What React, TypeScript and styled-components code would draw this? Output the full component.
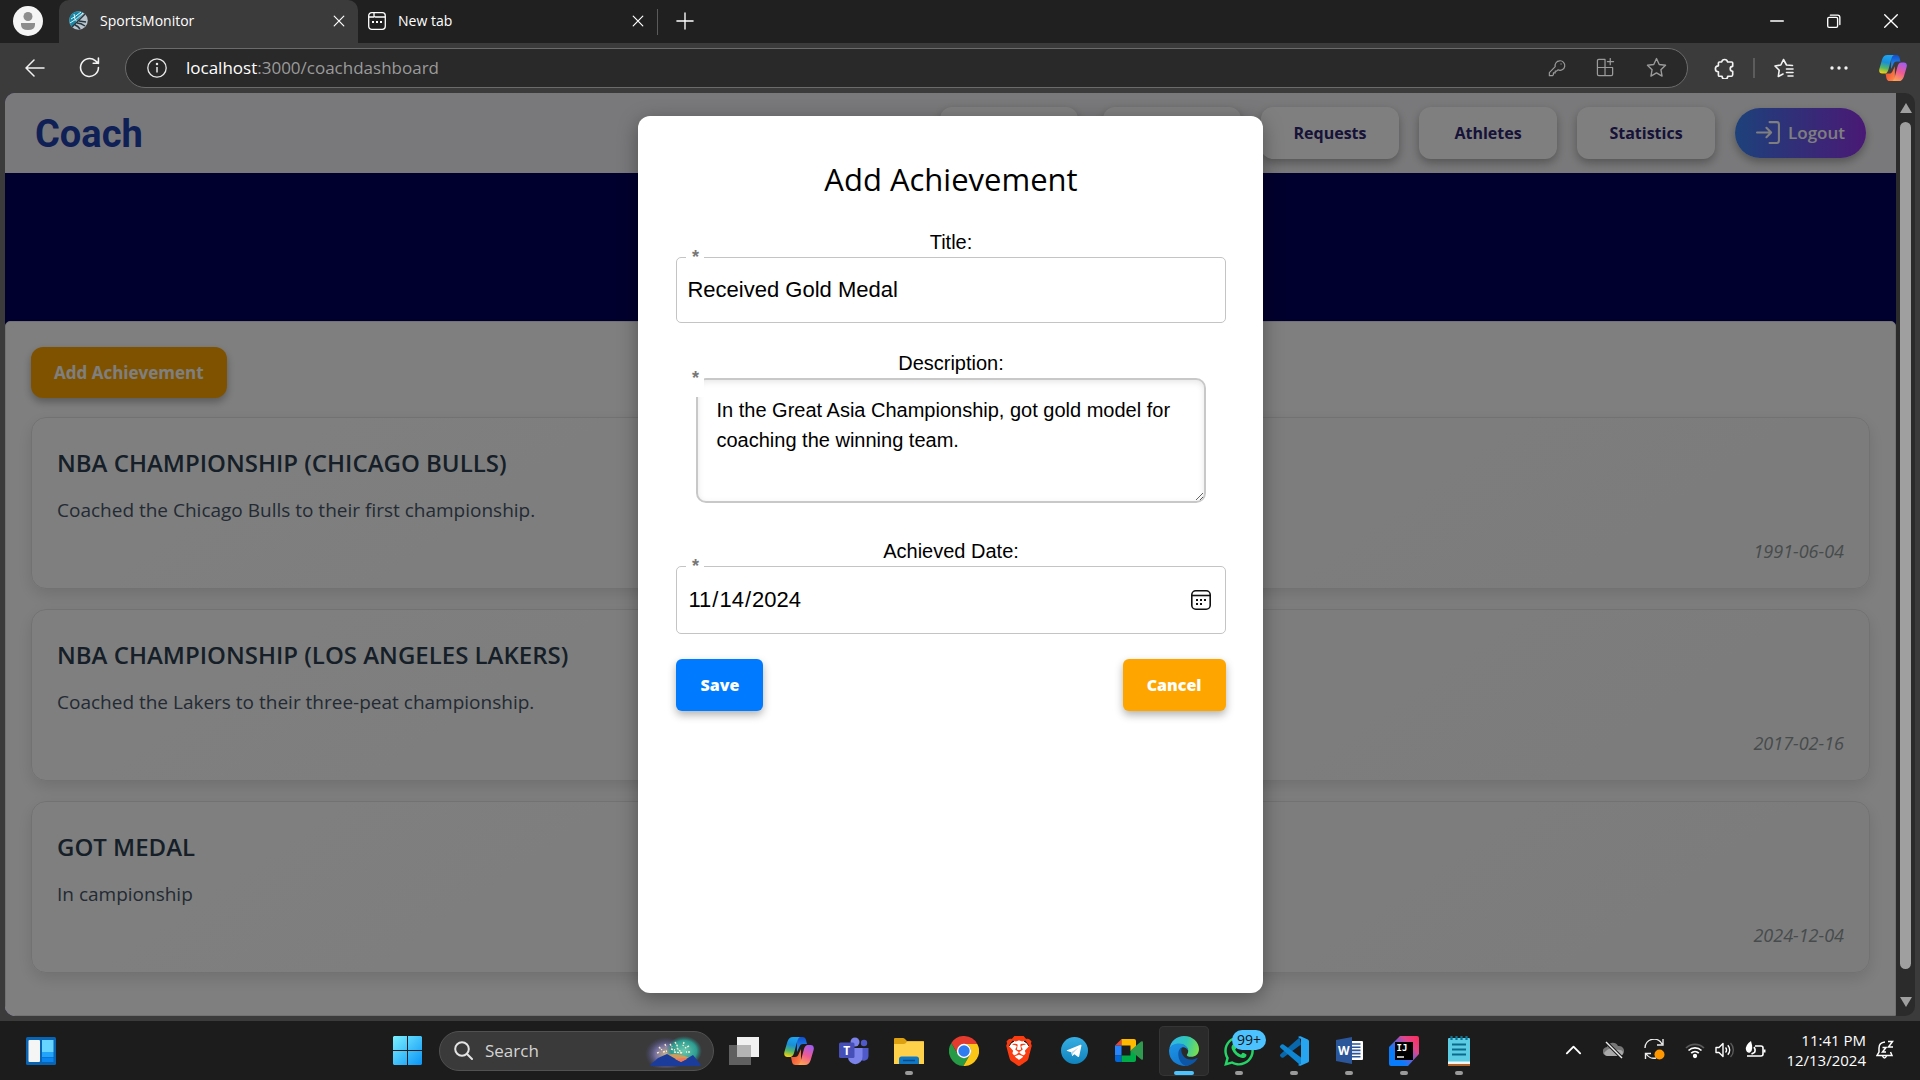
import React, { useState } from "react";
import styled, { createGlobalStyle } from "styled-components";
import { FaWhatsapp } from "react-icons/fa";
import { SiBrave } from "react-icons/si";

const ui = `"Open Sans", "Noto Sans", sans-serif`;
const arial = `"Liberation Sans", Arial, sans-serif`;

const Global = createGlobalStyle`
  * { box-sizing: border-box; }
  body { margin: 0; background: #3b3b3b; font-family: ${ui}; }
  button { font-family: inherit; border: 0; padding: 0; background: none; color: inherit; cursor: pointer; }
  svg { display: block; flex: none; }
  h1, h2, h3, p { margin: 0; }
`;

const Screen = styled.div`
  display: flex;
  flex-direction: column;
  height: 100vh;
  overflow: hidden;
`;

/* ---------- browser frame ---------- */
const TabStrip = styled.div`
  display: flex;
  align-items: stretch;
  flex: none;
  height: 43px;
  padding-right: 1px;
  background: #202020;
  color: #fff;
`;
const ProfileButton = styled.button`
  display: flex;
  align-items: center;
  width: 59px;
  padding: 0 0 1px 13px;
  flex: none;
`;
const Tab = styled.div<{ $active?: boolean }>`
  display: flex;
  align-items: center;
  width: 299px;
  padding: 0 11px 2px 10px;
  gap: 12px;
  border-radius: 10px 10px 0 0;
  background: ${(p) => (p.$active ? "#3b3b3b" : "transparent")};
  font-size: 14px;
`;
const TabTitle = styled.span`
  flex: 1;
`;
const StripDivider = styled.span`
  width: 1px;
  height: 26px;
  align-self: center;
  background: #5a5a5a;
`;
const StripButton = styled.button`
  display: grid;
  place-items: center;
  width: 53px;
  padding-bottom: 2px;
`;
const WindowControls = styled.div`
  display: flex;
  margin-left: auto;
`;
const WindowButton = styled.button`
  display: grid;
  place-items: center;
  width: 57px;
  padding-bottom: 1px;
`;
const Toolbar = styled.div`
  display: flex;
  align-items: center;
  flex: none;
  height: 50px;
  padding-left: 7px;
  background: #3b3b3b;
  color: #f2f2f2;
`;
const ToolButton = styled.button<{ $w?: number }>`
  display: grid;
  place-items: center;
  width: ${(p) => p.$w ?? 55}px;
  height: 40px;
  padding-bottom: 1px;
`;
const AddressBar = styled.div`
  display: flex;
  align-items: center;
  flex: 1;
  height: 40px;
  margin: 0 9px 0 8px;
  padding: 0 5px 0 21px;
  border: 1px solid #6b6b6b;
  border-radius: 20px;
  background: #292929;
  color: #9b9b9b;
  font-size: 17px;
`;
const Url = styled.span`
  flex: 1;
  margin-left: 19px;
  padding-bottom: 2px;
  b { font-weight: 400; color: #fff; }
`;
const ToolDivider = styled.span`
  width: 2px;
  height: 20px;
  background: #5c5c5c;
`;

/* ---------- page viewport ---------- */
const Viewport = styled.div`
  display: flex;
  flex: 1;
  min-height: 0;
  padding: 0 5px 5px;
  background: #3b3b3b;
`;
const Page = styled.div`
  position: relative;
  flex: 1;
  display: flex;
  flex-direction: column;
  border-radius: 10px 0 0 10px;
  overflow: hidden;
  background: #00005c;
`;
const ScrollTrack = styled.div`
  display: flex;
  flex-direction: column;
  align-items: center;
  gap: 9px;
  width: 19px;
  padding: 10px 0 9px;
  border-radius: 0 10px 10px 0;
  background: #2b2b2b;
`;
const ScrollThumb = styled.div`
  flex: 1;
  width: 11px;
  margin-bottom: 19px;
  border-radius: 6px;
  background: #9f9f9f;
`;
const Header = styled.header`
  display: flex;
  align-items: center;
  justify-content: space-between;
  flex: none;
  height: 80px;
  padding: 0 30px;
  background: #f3f3f6;
`;
const Brand = styled.h1`
  padding-top: 2px;
  font: 700 38px/46px Roboto, sans-serif;
  color: #1e40af;
`;
const Nav = styled.nav`
  display: flex;
  align-items: center;
  gap: 20px;
`;
const NavButton = styled.button`
  width: 138px;
  height: 52px;
  border-radius: 12px;
  background: #fff;
  color: #2c2470;
  font-size: 16px;
  font-weight: 700;
  box-shadow: 0 4px 10px rgba(0, 0, 0, 0.3);
  &:first-child { margin-right: 5px; }
`;
const LogoutButton = styled.button`
  display: flex;
  align-items: center;
  justify-content: center;
  gap: 7px;
  width: 131px;
  height: 50px;
  padding-bottom: 2px;
  border-radius: 25px;
  background: linear-gradient(to right, #3b82f6, #9333ea);
  color: #fff;
  font-size: 17px;
  font-weight: 600;
  box-shadow: 0 4px 8px rgba(0, 0, 0, 0.3);
`;
const Banner = styled.div`
  flex: none;
  height: 148px;
  background: #00005c;
`;
const Content = styled.main`
  flex: 1;
  display: flex;
  flex-direction: column;
  align-items: flex-start;
  padding: 25px;
  border: 1px solid #e4e4e4;
  border-radius: 5px 5px 0 0;
  background: #fff;
`;
const AddButton = styled.button`
  flex: none;
  height: 51px;
  padding: 0 23px;
  border-radius: 12px;
  background: orange;
  color: #fff;
  font-size: 17px;
  font-weight: 700;
  box-shadow: 0 4px 8px rgba(0, 0, 0, 0.3);
`;
const CardList = styled.div`
  display: flex;
  flex-direction: column;
  gap: 20px;
  width: 100%;
  margin-top: 19px;
`;
const Card = styled.article`
  display: flex;
  flex-direction: column;
  flex: none;
  padding: 25px 25px 24px;
  border: 1px solid #e4e4e4;
  border-radius: 15px;
  background: linear-gradient(145deg, #fff, #f8f8f8);
  box-shadow: 0 6px 16px rgba(0, 0, 0, 0.12);
`;
const CardTitle = styled.h3`
  font-size: 24px;
  font-weight: 600;
  line-height: 40px;
  text-transform: uppercase;
  color: #2c3e50;
`;
const CardText = styled.p`
  margin-top: 12px;
  font-size: 19px;
  line-height: 30px;
  color: #465569;
`;
const CardDate = styled.time`
  margin-top: 13px;
  align-self: flex-end;
  font-size: 18px;
  font-style: italic;
  line-height: 26px;
  color: #8d9798;
`;

/* ---------- dialog ---------- */
const Overlay = styled.div`
  position: absolute;
  inset: 0;
  display: flex;
  align-items: center;
  justify-content: center;
  background: rgba(0, 0, 0, 0.5);
`;
const Dialog = styled.form`
  width: 33%;
  height: 95%;
  padding: 40px 37px 40px 38px;
  border-radius: 12px;
  background: #fff;
  box-shadow: 0 5px 20px rgba(0, 0, 0, 0.35);
  font-family: ${arial};
`;
const DialogTitle = styled.h2`
  margin-bottom: 25px;
  font: 400 31px/46px ${ui};
  text-align: center;
`;
const Field = styled.div<{ $gap?: number }>`
  margin-bottom: ${(p) => p.$gap ?? 25}px;
`;
const FieldLabel = styled.label`
  display: block;
  font-size: 20px;
  line-height: 30px;
  text-align: center;
`;
const Control = styled.div`
  position: relative;
  display: flex;
`;
const Outline = styled.div<{ $h: number }>`
  display: flex;
  align-items: center;
  flex: 1;
  height: ${(p) => p.$h}px;
  padding: 0 14px 0 10px;
  border: 1px solid #c4c4c4;
  border-radius: 5px;
`;
const Input = styled.input`
  flex: 1;
  min-width: 0;
  padding: 0;
  border: 0;
  outline: 0;
  background: none;
  color: #000;
  font: 22px/32px ${arial};
  &::-webkit-calendar-picker-indicator { display: none; }
`;
const TextArea = styled.textarea`
  flex: 1;
  height: 125px;
  margin: 0 20px;
  padding: 15px 18px;
  border: 2px solid #c8c8c8;
  border-radius: 10px;
  outline: 0;
  color: #000;
  font: 20px/30px ${arial};
  box-shadow: inset 0 2px 6px rgba(0, 0, 0, 0.1);
`;
const RequiredMark = styled.span`
  position: absolute;
  left: 10px;
  top: -10px;
  width: 18px;
  height: 29px;
  background: #fff;
  color: #777;
  font-size: 18px;
  font-weight: 700;
  line-height: 20px;
  text-align: center;
`;
const Actions = styled.div`
  display: flex;
  justify-content: space-between;
`;
const ActionButton = styled.button<{ $color: string }>`
  height: 52px;
  padding: 0 24px;
  border-radius: 6px;
  background: ${(p) => p.$color};
  color: #fff;
  font: 800 16px/24px ${ui};
  box-shadow: 0 4px 8px rgba(0, 0, 0, 0.3);
`;

/* ---------- taskbar ---------- */
const Taskbar = styled.footer`
  display: flex;
  align-items: center;
  flex: none;
  height: 59px;
  background: #1c1c1c;
  color: #fff;
`;
const WidgetArea = styled.div`
  display: flex;
  width: 20%;
  padding-left: 26px;
`;
const AppRow = styled.div`
  display: flex;
  align-items: center;
  gap: 5px;
`;
const AppButton = styled.button<{ $active?: boolean }>`
  position: relative;
  display: grid;
  place-items: center;
  width: 50px;
  height: 50px;
  border-radius: 5px;
  background: ${(p) => (p.$active ? "#2a2a2a" : "transparent")};
  box-shadow: ${(p) => (p.$active ? "inset 0 0 0 1px #353535" : "none")};
`;
const StartButton = styled(AppButton)`
  padding-right: 3px;
`;
const RunMark = styled.span<{ $active?: boolean }>`
  position: absolute;
  bottom: 1px;
  left: 50%;
  transform: translateX(-50%);
  width: ${(p) => (p.$active ? 20 : 8)}px;
  height: 4px;
  border-radius: 2px;
  background: ${(p) => (p.$active ? "#4cc2ff" : "#9a9a9a")};
`;
const CountBadge = styled.span`
  position: absolute;
  top: 4px;
  left: 18px;
  padding: 0 5px;
  border-radius: 10px;
  background: #4cc2ff;
  color: #111;
  font-size: 14px;
  line-height: 20px;
`;
const SearchBox = styled.label`
  display: flex;
  align-items: center;
  gap: 12px;
  width: 275px;
  height: 40px;
  padding: 0 10px 0 14px;
  border: 1px solid #515151;
  border-radius: 20px;
  background: #3a3a3a;
  overflow: hidden;
`;
const SearchInput = styled.input`
  flex: 1;
  min-width: 0;
  padding: 0;
  border: 0;
  outline: 0;
  background: none;
  color: #fff;
  font: 17px/24px ${ui};
  &::placeholder { color: #d4d4d4; opacity: 1; }
`;
const Tray = styled.div`
  display: flex;
  align-items: center;
  gap: 20px;
  margin-left: auto;
  padding: 0 26px 2px 0;
`;
const StatusGroup = styled.div`
  display: flex;
  align-items: center;
  gap: 10px;
`;
const Clock = styled.div`
  margin-right: -10px;
  font-size: 15px;
  line-height: 20px;
  text-align: right;
`;

const line = (d: string, size = 20, w = 1.5, box = 20) => (
  <svg width={size} height={size} viewBox={`0 0 ${box} ${box}`} fill="none" stroke="currentColor" strokeWidth={w} strokeLinecap="round" strokeLinejoin="round">
    <path d={d} />
  </svg>
);

const CLOSE = "M4 4 16 16M16 4 4 16";
const STAR = "M10 1.5l2.6 5.6 6 .8-4.4 4.2 1.1 6.1L10 15.200l-5.300 3 1.100-6.100L1.400 7.900l6-.8z";

const Favicon = () => (
  <svg width="19" height="19" viewBox="0 0 19 19">
    <circle cx="9.500" cy="9.500" r="9.300" fill="#b9c4cc" />
    <path d="M.3 10A9.300 9.300 0 0 1 14.500 1.700L3 16A9 9 0 0 1 .3 10z" fill="#1687a7" />
    <path d="M2 8Q6 6 12 1M1 12Q7 9 14 2M5 3Q5 9 9 12" fill="none" stroke="#e4f6fb" />
    <path d="M3 16 16 3M10 10l7 1M8 12q4 0 8 3M6 14q3 1 5 4" fill="none" stroke="#263740" strokeWidth="1.500" />
  </svg>
);

const Copilot = ({ size = 30 }: { size?: number }) => (
  <svg width={size} height={size} viewBox="0 0 30 30">
    <defs>
      <linearGradient id="cpA" x1=".5" y1="0" x2=".3" y2="1">
        <stop offset="0" stopColor="#1ea5f2" /><stop offset=".4" stopColor="#1a8fd6" />
        <stop offset=".7" stopColor="#52b66a" /><stop offset="1" stopColor="#f6d20c" />
      </linearGradient>
      <linearGradient id="cpB" x1=".7" y1="0" x2=".3" y2="1">
        <stop offset="0" stopColor="#a35cf0" /><stop offset=".5" stopColor="#ee5a92" /><stop offset="1" stopColor="#ffa44f" />
      </linearGradient>
      <linearGradient id="cpC" x1="0" y1="0" x2="0" y2="1">
        <stop offset="0" stopColor="#0f4fd0" /><stop offset="1" stopColor="#2a9df4" />
      </linearGradient>
      <linearGradient id="cpD" x1="0" y1="0" x2="1" y2="1">
        <stop offset="0" stopColor="#e83a2c" /><stop offset="1" stopColor="#ff8f4a" />
      </linearGradient>
    </defs>
    <path d="M13 1H18.500C20.500 1 21.500 2 22 4L23 8H19C17 8 16 9 15.300 11L13 16z" fill="url(#cpC)" />
    <path d="M17 29H11.500C9.500 29 8.500 28 8 26L7 21H11C13 21 14 20 14.700 18L17 13z" fill="url(#cpD)" />
    <path d="M9 1H17C14.800 1 14 2.500 13 6L10.300 16C9.300 19.500 8.400 21 5.500 21H3.500C.6 21-.3 19 .4 16L3.300 6C4.500 2.500 6 1 9 1z" fill="url(#cpA)" />
    <path d="M21 29H13C15.200 29 16 27.500 17 24L19.700 14C20.700 10.500 21.600 9 24.500 9H26.500C29.400 9 30.300 11 29.600 14L26.700 24C25.500 27.500 24 29 21 29z" fill="url(#cpB)" />
  </svg>
);

const StartLogo = () => (
  <svg width="29" height="29" viewBox="0 0 29 29">
    <defs><linearGradient id="win" x1="0" y1="0" x2="1" y2="1"><stop stopColor="#7bf0ff" /><stop offset="1" stopColor="#0a94f5" /></linearGradient></defs>
    <path d="M1 0H14V14H0V1zM15 0H28L29 1V14H15zM0 15H14V29H1L0 28zM15 15H29V28L28 29H15z" fill="url(#win)" />
  </svg>
);

const Widgets = () => (
  <svg width="30" height="28" viewBox="0 0 30 28">
    <rect width="30" height="28" rx="1.500" fill="#0a64b4" />
    <rect x="2.500" y="3" width="11.500" height="22" rx="1" fill="#f5f5f5" />
    <path d="M16 3H27.500V15H16z" fill="#66d4ff" /><path d="M16 15H27.500V20H16z" fill="#22a4fb" /><path d="M16 20.500H27.500V25H16z" fill="#0a84ee" />
  </svg>
);

const Fireworks = () => (
  <svg width="58" height="34" viewBox="0 0 58 32">
    <defs>
      <radialGradient id="fwA"><stop stopColor="#c7b08a" /><stop offset=".5" stopColor="#7772a0" /><stop offset="1" stopColor="#4a4a86" stopOpacity="0" /></radialGradient>
      <radialGradient id="fwB"><stop stopColor="#6bc9b0" /><stop offset=".7" stopColor="#2c9c90" /><stop offset="1" stopColor="#2b7f80" stopOpacity="0" /></radialGradient>
    </defs>
    <ellipse cx="21" cy="19" rx="21" ry="17" fill="url(#fwA)" />
    <ellipse cx="39" cy="16" rx="18" ry="15" fill="url(#fwB)" />
    <path d="M10 26Q28 12 50 26z" fill="#cf9c5c" />
    <path d="M5 30 13 23 22 19 36 27 48 20 56 30Q56 31 54 31H7Q5 31 5 30z" fill="#1c3c9c" />
    <path d="M30 24l6 3 6-3-3-1z" fill="#f1755c" />
    <path d="M12 18l3-1M14 12l3 3M20 9l1 3M25 9l2 3M30 7l3 5M39 7l-1 4M44 11l-4 2M45 17l-4 0M32 13l5 5M29 17l8 1M18 17l4-1M26 14l4 1" stroke="#f7ecd2" strokeWidth="1.400" strokeDasharray="2 1" />
  </svg>
);

const TaskView = () => (
  <svg width="30" height="28" viewBox="0 0 30 28">
    <rect x="8" width="22" height="20" fill="#f1f1f1" /><rect y="8" width="22" height="20" fill="#606060" /><path d="M8 8H22V20H8z" fill="#b4b4b4" />
  </svg>
);

const Teams = () => (
  <svg width="30" height="28" viewBox="0 0 30 28">
    <circle cx="25" cy="6" r="3.200" fill="#5059c9" /><path d="M20 11H29.500V19A5 5 0 0 1 20 21z" fill="#5059c9" />
    <circle cx="16" cy="5" r="4.500" fill="#7b83eb" /><path d="M9 11H23.500V20A7.200 7.200 0 0 1 9 20z" fill="#7b83eb" />
    <rect y="5.500" width="15.500" height="15.500" rx="1.500" fill="#464eb8" />
    <text x="7.700" y="17.500" textAnchor="middle" fontSize="12" fontWeight="700" fill="#fff" fontFamily={ui}>T</text>
  </svg>
);

const Folder = () => (
  <svg width="30" height="28" viewBox="0 0 30 28">
    <path d="M0 2Q0 1 1 1H9Q10 1 11 2L13 4H29Q30 4 30 5V12H0z" fill="#dca010" />
    <path d="M0 7H10Q12 6.500 13 4.500H30V27H0z" fill="#ffd04a" />
    <path d="M5 27V22Q5 19.500 7.500 19.500H22.500Q25 19.500 25 22V27z" fill="#0f79c8" /><path d="M9 23.500H21" stroke="#084a85" strokeWidth="1.500" />
  </svg>
);

const Chrome = () => (
  <svg width="30" height="30" viewBox="0 0 30 30">
    <path d="M2.300 7A15 15 0 0 1 28.270 8H15A7 7 0 0 0 8.940 18.500z" fill="#e33b2e" />
    <path d="M2.300 7L8.940 18.500A7 7 0 0 0 21.060 18.500L14.400 30A15 15 0 0 1 2.300 7z" fill="#269a44" />
    <path d="M28.270 8H15A7 7 0 0 1 21.060 18.500L14.400 30A15 15 0 0 0 28.270 8z" fill="#fcc617" />
    <circle cx="15" cy="15" r="7.200" fill="#fff" /><circle cx="15" cy="15" r="5.700" fill="#2f7bf0" />
  </svg>
);

const BraveTile = styled.span`
  display: grid;
  color: #fb3c11;
  border-radius: 50%;
  background: radial-gradient(closest-side, #fff 70%, transparent 72%);
`;

const Telegram = () => (
  <svg width="27" height="27" viewBox="0 0 27 27">
    <defs><linearGradient id="tg" x1="0" y1="0" x2="0" y2="1"><stop stopColor="#37aee2" /><stop offset="1" stopColor="#0f83bd" /></linearGradient></defs>
    <circle cx="13.500" cy="13.500" r="13.500" fill="url(#tg)" />
    <path d="M6 13.200 19.500 7.700Q20.700 7.400 20.400 8.800L18.200 19.200Q17.900 20.300 16.800 19.700L13.400 17.200 11.700 18.800Q11.200 19.200 11 18.400L10.200 15.200 6.200 14Q5.300 13.600 6 13.200z" fill="#fff" /><path d="M10.300 15.200 17.500 10.500 12 16.200 11.600 18.600z" fill="#b5d6e8" />
  </svg>
);

const Meet = () => (
  <svg width="28" height="23" viewBox="0 0 28 23">
    <path d="M0 6.500 6.500 0V6.500z" fill="#ea4335" /><path d="M6.500 0H19Q21 0 21 2V10L15.500 12V6.500H6.500z" fill="#ffba00" />
    <path d="M0 6.500H6.500V16.500H0z" fill="#2684fc" /><path d="M0 16.500H6.500V23H2Q0 23 0 21z" fill="#0066da" />
    <path d="M6.500 16.500H15.500V12L21 8V21Q21 23 19 23H6.500z" fill="#00ac47" /><path d="M15.500 11.500 26 2.500Q28 1.500 28 3.500V19.500Q28 21.500 26 20.200z" fill="#2e9a4d" />
  </svg>
);

const Edge = () => (
  <svg width="30" height="30" viewBox="0 0 30 30">
    <defs>
      <linearGradient id="edA" x1="0" y1=".3" x2="1" y2=".5"><stop stopColor="#2fb5ee" /><stop offset=".55" stopColor="#30c6b5" /><stop offset="1" stopColor="#78e04e" /></linearGradient>
      <linearGradient id="edB" x1=".3" y1="0" x2=".6" y2="1"><stop stopColor="#1c93e4" /><stop offset="1" stopColor="#1478cf" /></linearGradient>
    </defs>
    <path d="M.3 13C1.500 5 8 0 15 0C24 0 30 6.500 30 13C30 18 26.500 20.800 22 20.800C19 20.800 17.800 20 17.800 19C17.800 18.200 19.200 17.500 19.200 15C19.200 11.500 15.500 8 10.500 8C5 8 1.500 10.500.3 13z" fill="url(#edA)" />
    <path d="M0 15C0 10 5 7.600 10 7.600C15 7.600 19 11 19.200 14.500C18 12 15 10.500 13 11.500C10.500 13 10 16 10 18C10 24 14 28.500 20 29.200C11 32 0 26 0 15z" fill="url(#edB)" />
    <path d="M9.300 18C9.300 15 10.500 12.500 12.700 11.500C11 17 15 23.600 22 23.600C24.500 23.600 26.500 22.800 28 22Q28.900 21.800 28.500 22.600C26 27 21.500 30 16.500 30C12 28 9.300 23 9.300 18z" fill="#0d55a5" />
  </svg>
);

const VsCode = () => (
  <svg width="30" height="30" viewBox="0 0 30 30">
    <path d="M1.500 20.500Q.2 19.500 1.400 18.300L20.500 1.500 22 8.500 4.500 21.400Q3.500 22.200 2.500 21.400z" fill="#0868ab" />
    <path d="M21.500.3 28.800 3.400Q30 4 30 5.300V24.700Q30 26 28.800 26.600L21.500 29.800Q20 30 19 29L22 27V3L19 1Q20 .1 21.500.3z" fill="#27a5f0" />
    <path d="M1.500 9.500Q.2 10.500 1.400 11.700L20.500 28.500Q22 28 22 26.500V21.500L4.500 8.600Q3.500 7.800 2.500 8.600z" fill="#0f86d2" />
  </svg>
);

const Word = () => (
  <svg width="27" height="27" viewBox="0 0 27 27">
    <path d="M14 4H26Q27 4 27 5V22Q27 23 26 23H14z" fill="#fff" />
    <path d="M16 7H24.500M16 10.200H24.500M16 13.400H24.500M16 16.600H24.500M16 19.800H24.500" stroke="#2b579a" strokeWidth="1.600" />
    <path d="M0 3 16 0V27L0 24z" fill="#2b579a" />
    <text x="7.800" y="18" textAnchor="middle" fontSize="12" fontWeight="700" fill="#fff" fontFamily={ui}>W</text>
  </svg>
);

const IntelliJ = () => (
  <svg width="30" height="30" viewBox="0 0 30 30">
    <defs><linearGradient id="ij" x1="1" y1="0" x2="0" y2=".9"><stop stopColor="#ff2b55" /><stop offset=".3" stopColor="#e0458a" /><stop offset=".55" stopColor="#5a63dc" /><stop offset=".75" stopColor="#087cfa" /></linearGradient></defs>
    <path d="M11 0H28Q30 0 30 2V18L19 30H2Q0 30 0 28V11z" fill="url(#ij)" />
    <path d="M6 6H24V24H6z" fill="#000" />
    <text x="7.500" y="15" fontSize="9" fontWeight="700" fill="#fff" fontFamily="DejaVu Sans Mono, monospace">IJ</text>
    <path d="M8 21H15" stroke="#fff" strokeWidth="1.400" />
  </svg>
);

const Notepad = () => (
  <svg width="22" height="30" viewBox="0 0 22 30">
    <rect y="2" width="22" height="27" rx="1" fill="#5ccbe4" /><path d="M0 25.500H22V28H0z" fill="#f4f4f4" /><path d="M0 28H22V30H0z" fill="#b4652a" />
    <path d="M4 8.500H18M4 13.500H18M4 18.500H18" stroke="#0b6a8a" strokeWidth="1.800" /><path d="M3.500 0V4M8.500 0V4M13.500 0V4M18.500 0V4" stroke="#0c7392" strokeWidth="2.200" />
  </svg>
);

const apps: { name: string; icon: React.ReactNode; state?: "running" | "active"; badge?: string }[] = [
  { name: "Task view", icon: <TaskView /> },
  { name: "Copilot", icon: <Copilot /> },
  { name: "Teams", icon: <Teams /> },
  { name: "File Explorer", icon: <Folder />, state: "running" },
  { name: "Chrome", icon: <Chrome /> },
  { name: "Brave", icon: <BraveTile><SiBrave size={30} /></BraveTile> },
  { name: "Telegram", icon: <Telegram /> },
  { name: "Meet", icon: <Meet /> },
  { name: "Edge", icon: <Edge />, state: "active" },
  { name: "WhatsApp", icon: <FaWhatsapp size={34} color="#25d366" />, state: "running", badge: "99+" },
  { name: "VS Code", icon: <VsCode />, state: "running" },
  { name: "Word", icon: <Word />, state: "running" },
  { name: "IntelliJ IDEA", icon: <IntelliJ />, state: "running" },
  { name: "Notepad", icon: <Notepad />, state: "running" },
];

const achievements = [
  { title: "NBA Championship (Chicago Bulls)", text: "Coached the Chicago Bulls to their first championship.", date: "1991-06-04" },
  { title: "NBA Championship (Los Angeles Lakers)", text: "Coached the Lakers to their three-peat championship.", date: "2017-02-16" },
  { title: "Got Medal", text: "In campionship", date: "2024-12-04" },
];

function BrowserTop() {
  return (
    <>
      <TabStrip>
        <ProfileButton aria-label="Profile">
          <svg width="30" height="30" viewBox="0 0 30 30">
            <circle cx="15" cy="15" r="15" fill="#f5f5f5" /><circle cx="15" cy="10.500" r="4.500" fill="#8d8d8d" />
            <path d="M8 17H22V18.500Q22 24 15 24T8 18.500z" fill="#8d8d8d" />
          </svg>
        </ProfileButton>
        <Tab $active>
          <Favicon />
          <TabTitle>SportsMonitor</TabTitle>
          <button aria-label="Close tab">{line(CLOSE, 16)}</button>
        </Tab>
        <Tab>
          <svg width="18" height="18" viewBox="0 0 18 18" fill="none" stroke="currentColor" strokeWidth="1.300">
            <rect x=".7" y=".7" width="16.600" height="16.600" rx="3" /><path d="M6 1V3.500Q6 5 7.500 5H17M1 5H6" /><path d="M4 10H6M8 10H10M12 10H14" strokeWidth="2" />
          </svg>
          <TabTitle>New tab</TabTitle>
          <button aria-label="Close tab">{line(CLOSE, 16)}</button>
        </Tab>
        <StripDivider />
        <StripButton aria-label="Open new tab">{line("M10 1V19M1 10H19", 18)}</StripButton>
        <WindowControls>
          <WindowButton aria-label="Minimize">{line("M3 10H17", 18)}</WindowButton>
          <WindowButton aria-label="Restore">{line("M3 7.500Q3 6 4.500 6H12.500Q14 6 14 7.500V15.500Q14 17 12.500 17H4.500Q3 17 3 15.500zM6 3.500H14Q16.500 3.500 16.500 6V14", 18)}</WindowButton>
          <WindowButton aria-label="Close">{line("M3 3 17 17M17 3 3 17", 18)}</WindowButton>
        </WindowControls>
      </TabStrip>
      <Toolbar>
        <ToolButton aria-label="Back">{line("M19 10H1M9 2 1 10 9 18", 20)}</ToolButton>
        <ToolButton aria-label="Refresh">{line("M18.500 10A8.500 8.500 0 1 1 15.500 3.500L18.500 6M18.500 1V6H13.500", 21)}</ToolButton>
        <AddressBar>
          <svg width="20" height="20" viewBox="0 0 20 20" fill="none" stroke="#e8e8e8" strokeWidth="1.300">
            <circle cx="10" cy="10" r="9.200" /><path d="M10 9V14.500" strokeWidth="1.500" /><circle cx="10" cy="6" r=".6" fill="#e8e8e8" />
          </svg>
          <Url><b>localhost</b>:3000/coachdashboard</Url>
          <ToolButton $w={49} aria-label="Passwords">
            {line("M12.800 2A5.300 5.300 0 1 1 11 12L9.500 13.500H8V15.500H6V17.500L5 18.500H1.500V15.200L8 8.500A5.300 5.300 0 0 1 12.800 2M14.500 5.400V5.600", 18, 1.3)}
          </ToolButton>
          <ToolButton $w={49} aria-label="Apps">
            {line("M9 1.500H3Q1.500 1.500 1.500 3V17Q1.500 18.500 3 18.500H16Q17.500 18.500 17.500 17V10H1.500M9.500 1.500V18.500M15 .5V7M12 3.700H18.500", 19, 1.3)}
          </ToolButton>
          <ToolButton $w={52} aria-label="Favorite">{line(STAR, 21, 1.3)}</ToolButton>
        </AddressBar>
        <ToolButton $w={56} aria-label="Extensions">
          {line("M7 4.500A2.700 2.700 0 0 1 12.300 4.500H16Q17 4.500 17 5.500V8.500A2 2 0 0 0 17 13V16Q17 17.500 16 17.500H12.500A2.600 2.600 0 0 1 7.300 17.500H5Q4 17.500 4 16.500V13.500A2.600 2.600 0 0 1 4 8V5.500Q4 4.500 5 4.500z", 22, 1.5)}
        </ToolButton>
        <ToolDivider />
        <ToolButton $w={58} aria-label="Favorites list">
          {line("M18.500 7.500 12.500 7 9.500 1.500 6.800 7 1 8 5.200 12.200 4.300 18.500 9 16M12.500 11H19M12.500 14.500H19M14 18H19", 20, 1.6)}
        </ToolButton>
        <ToolButton $w={52} aria-label="Menu">
          <svg width="18" height="4" viewBox="0 0 18 4" fill="currentColor"><circle cx="2" cy="2" r="1.700" /><circle cx="9" cy="2" r="1.700" /><circle cx="16" cy="2" r="1.700" /></svg>
        </ToolButton>
        <ToolButton aria-label="Copilot"><Copilot size={28} /></ToolButton>
      </Toolbar>
    </>
  );
}

function AchievementDialog() {
  const [title, setTitle] = useState("Received Gold Medal");
  const [text, setText] = useState("In the Great Asia Championship, got gold model for coaching the winning team.");
  const [date, setDate] = useState("2024-11-14");
  return (
    <Overlay>
      <Dialog onSubmit={(e) => e.preventDefault()}>
        <DialogTitle>Add Achievement</DialogTitle>
        <Field>
          <FieldLabel htmlFor="title">Title:</FieldLabel>
          <Control>
            <Outline $h={66}><Input id="title" value={title} onChange={(e) => setTitle(e.target.value)} /></Outline>
            <RequiredMark>*</RequiredMark>
          </Control>
        </Field>
        <Field $gap={33}>
          <FieldLabel htmlFor="description">Description:</FieldLabel>
          <Control>
            <TextArea id="description" spellCheck={false} value={text} onChange={(e) => setText(e.target.value)} />
            <RequiredMark>*</RequiredMark>
          </Control>
        </Field>
        <Field>
          <FieldLabel htmlFor="date">Achieved Date:</FieldLabel>
          <Control>
            <Outline $h={68}>
              <Input id="date" type="date" value={date} onChange={(e) => setDate(e.target.value)} />
              <svg width="20" height="20" viewBox="0 0 20 20" fill="none" stroke="#111" strokeWidth="1.600">
                <rect x=".8" y=".8" width="18.400" height="18.400" rx="4" /><path d="M1 5.500H19" />
                <path d="M5 10H7M9 10H11M13 10H15M5 14H7M9 14H11" strokeWidth="2.200" />
              </svg>
            </Outline>
            <RequiredMark>*</RequiredMark>
          </Control>
        </Field>
        <Actions>
          <ActionButton $color="#007bff" type="submit">Save</ActionButton>
          <ActionButton $color="orange" type="button">Cancel</ActionButton>
        </Actions>
      </Dialog>
    </Overlay>
  );
}

function SystemBar() {
  return (
    <Taskbar>
      <WidgetArea><button aria-label="Widgets"><Widgets /></button></WidgetArea>
      <AppRow>
        <StartButton aria-label="Start"><StartLogo /></StartButton>
        <SearchBox>
          <svg width="19" height="19" viewBox="0 0 19 19" fill="none" stroke="#e4e4e4" strokeWidth="2"><circle cx="8" cy="8" r="6.800" /><path d="M13 13 18 18" strokeLinecap="round" /></svg>
          <SearchInput placeholder="Search" aria-label="Search" />
          <Fireworks />
        </SearchBox>
        {apps.map((a) => (
          <AppButton key={a.name} aria-label={a.name} $active={a.state === "active"}>
            {a.icon}
            {a.state && <RunMark $active={a.state === "active"} />}
            {a.badge && <CountBadge>{a.badge}</CountBadge>}
          </AppButton>
        ))}
      </AppRow>
      <Tray>
        {line("M3 14 10 7 17 14", 19, 2)}
        <svg width="21" height="18" viewBox="0 0 21 18">
          <path d="M4.500 15A4.500 4.500 0 0 1 4 6 6 6 0 0 1 15 5 5 5 0 0 1 17 15z" fill="#777" /><path d="M1 12Q7 5 12 9 20 8 20 12 19.500 15 17 15H4.500Q2 15 1 12z" fill="#aaa" />
          <path d="M3 1 19 17" stroke="#1c1c1c" strokeWidth="3.500" /><path d="M3 1 19 17" stroke="#eee" strokeWidth="1.400" />
        </svg>
        <svg width="21" height="21" viewBox="0 0 21 21" fill="none" stroke="#eee" strokeWidth="1.400">
          <path d="M1 9A9 9 0 0 1 18 5M19 0V6H13M12 19A9 9 0 0 1 2 14.500M1.500 20V14.500H7" /><circle cx="15.500" cy="15.500" r="5" fill="#ff9800" stroke="none" />
        </svg>
        <StatusGroup>
          <svg width="20" height="18" viewBox="0 0 20 18" fill="none" stroke="#fff" strokeWidth="1.700">
            <path d="M1 7A13 13 0 0 1 19 7" stroke="#5a5a5a" /><path d="M3.500 9.500A9.500 9.500 0 0 1 16.500 9.500M6.200 12.200A5.500 5.500 0 0 1 13.800 12.200" /><circle cx="10" cy="15" r="1.300" fill="#fff" />
          </svg>
          <svg width="20" height="18" viewBox="0 0 20 18" fill="none" stroke="#fff" strokeWidth="1.400" strokeLinejoin="round">
            <path d="M1 6.500H4L8 2.500V15.500L4 11.500H1zM10.500 6.500A3.500 3.500 0 0 1 10.500 11.500M12.800 4.200A7 7 0 0 1 12.800 13.800" /><path d="M15.500 2A10 10 0 0 1 15.500 16" stroke="#5a5a5a" />
          </svg>
          <svg width="21" height="18" viewBox="0 0 21 18" fill="none" stroke="#fff" strokeWidth="1.600">
            <path d="M10 5H16Q18 5 18 7V13Q18 15 16 15H2" /><path d="M19.500 8.500V11.500" strokeWidth="2" /><path d="M6 0Q0 4 1 9 2 12.500 5 11.500 9 9 6 0z" fill="#fff" stroke="none" /><path d="M9 6Q11 9 9.500 11.500L6.500 13" />
          </svg>
        </StatusGroup>
        <Clock>11:41 PM<br />12/13/2024</Clock>
        <svg width="18" height="20" viewBox="0 0 18 20" fill="none" stroke="#fff" strokeWidth="1.500">
          <path d="M9 2Q3 2.500 3 8V12L1 15.500H16L14.500 12M6.500 16Q8.500 20 10.500 16" /><path d="M6.500 7.500H10L6.500 12H10M12 1.500H16.500L12.500 7H17" />
        </svg>
      </Tray>
    </Taskbar>
  );
}

export default function App() {
  return (
    <Screen>
      <Global />
      <BrowserTop />
      <Viewport>
        <Page>
          <Header>
            <Brand>Coach</Brand>
            <Nav>
              <NavButton aria-label="Home" />
              <NavButton aria-label="Profile" />
              <NavButton>Requests</NavButton>
              <NavButton>Athletes</NavButton>
              <NavButton>Statistics</NavButton>
              <LogoutButton>
                {line("M1 12H14M10 7.500 14.500 12 10 16.500M13 2H20Q22 2 22 4V20Q22 22 20 22H13", 25, 2, 24)}
                Logout
              </LogoutButton>
            </Nav>
          </Header>
          <Banner />
          <Content>
            <AddButton>Add Achievement</AddButton>
            <CardList>
              {achievements.map((a) => (
                <Card key={a.date}>
                  <CardTitle>{a.title}</CardTitle>
                  <CardText>{a.text}</CardText>
                  <CardDate>{a.date}</CardDate>
                </Card>
              ))}
            </CardList>
          </Content>
          <AchievementDialog />
        </Page>
        <ScrollTrack>
          <svg width="12" height="10" viewBox="0 0 12 10"><path d="M6 0 12 10H0z" fill="#9f9f9f" /></svg>
          <ScrollThumb />
          <svg width="12" height="10" viewBox="0 0 12 10"><path d="M0 0H12L6 10z" fill="#9f9f9f" /></svg>
        </ScrollTrack>
      </Viewport>
      <SystemBar />
    </Screen>
  );
}
